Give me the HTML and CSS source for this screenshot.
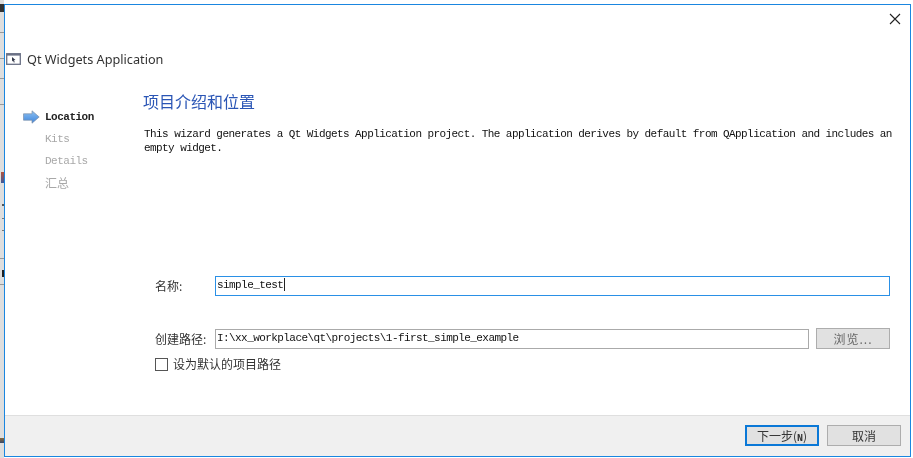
FILE: index.html
```html
<!DOCTYPE html>
<html lang="zh-CN">
<head>
<meta charset="utf-8">
<title>Qt Widgets Application</title>
<link rel="stylesheet" href="styles.css">
</head>
<body>
<div class="backdrop"></div>
<div class="dialog">
  <div class="content">
    <div class="closebar">
      <svg class="close" width="12" height="12" viewBox="0 0 12 12"><path d="M1 1l10 10M11 1L1 11" stroke="#222" stroke-width="1.1" fill="none"/></svg>
    </div>
    <div class="titlerow">
      <svg class="appicon" width="15" height="12" viewBox="0 0 15 12">
        <rect x=".7" y=".7" width="13.6" height="10.6" fill="#fff" stroke="#6b7186" stroke-width="1.300"/>
        <rect x="1" y="1" width="13" height="1.600" fill="#6b7186"/>
        <path d="M6 4l3.500 3-1.600.2.900 2-1 .4-.8-2L6 8.600z" fill="#33384a"/>
      </svg>
      <span class="apptitle">Qt Widgets Application</span>
    </div>
    <div class="wizard">
      <ul class="steps">
        <li class="step active">
          <svg class="arrow" width="17" height="14" viewBox="0 0 17 14">
            <defs><linearGradient id="ag" x1="0" y1="0" x2="0" y2="1"><stop offset="0" stop-color="#8cc0f2"/><stop offset="1" stop-color="#3f86dc"/></linearGradient></defs>
            <path d="M.5 3.800h8.500V.8L16.200 7 9 13.200v-3H.5z" fill="url(#ag)" stroke="#7e8fa8" stroke-width=".7"/>
          </svg>
          <span>Location</span>
        </li>
        <li class="step">Kits</li>
        <li class="step">Details</li>
        <li class="step cjk">汇总</li>
      </ul>
      <main class="page">
        <h1 class="heading">项目介绍和位置</h1>
        <p class="desc">This wizard generates a Qt Widgets Application project. The application derives by default from QApplication and includes an empty widget.</p>
        <div class="form">
          <div class="field name-field">
            <label class="label">名称:</label>
            <div class="input focused">simple_test<i class="caret"></i></div>
          </div>
          <div class="field path-field">
            <label class="label">创建路径:</label>
            <div class="input">I:\xx_workplace\qt\projects\1-first_simple_example</div>
            <button class="btn browse">浏览...</button>
          </div>
          <div class="check">
            <span class="box"></span>
            <span>设为默认的项目路径</span>
          </div>
        </div>
      </main>
    </div>
  </div>
  <div class="footer">
    <button class="btn primary">下一步(<span class="mn">N</span>)</button>
    <button class="btn">取消</button>
  </div>
</div>
</body>
</html>
```
FILE: styles.css
```css
* { box-sizing: border-box; }
html, body { margin: 0; height: 100%; }
body {
  display: flex;
  width: 913px;
  height: 458px;
  overflow: hidden;
  background: #fff;
  font-family: "Noto Sans CJK SC", "Noto Sans", sans-serif;
  color: #333;
  filter: blur(.35px);
}
.backdrop {
  width: 4px;
  flex: none;
  height: 458px;
  background:
    linear-gradient(#333, #333) 0 4px / 4px 8px no-repeat,
    linear-gradient(#999, #999) 0 32px / 4px 1px no-repeat,
    linear-gradient(#999, #999) 0 58px / 4px 1px no-repeat,
    linear-gradient(#999, #999) 0 78px / 4px 1px no-repeat,
    linear-gradient(#999, #999) 0 104px / 4px 1px no-repeat,
    linear-gradient(#b5533c, #3d5a9c) 1px 172px / 3px 11px no-repeat,
    linear-gradient(#555, #555) 2px 204px / 2px 2px no-repeat,
    linear-gradient(#777, #777) 2px 218px / 2px 1px no-repeat,
    linear-gradient(#777, #777) 2px 230px / 2px 1px no-repeat,
    linear-gradient(#999, #999) 0 258px / 4px 1px no-repeat,
    linear-gradient(#222, #222) 2px 270px / 2px 7px no-repeat,
    linear-gradient(#999, #999) 0 284px / 4px 1px no-repeat,
    linear-gradient(#8a6a3a, #3a4a6a) 0 438px / 4px 5px no-repeat,
    #dedede;
}
.dialog {
  width: 907px;
  height: 453px;
  margin-top: 4px;
  flex: none;
  display: flex;
  flex-direction: column;
  border: 1px solid #1a86e0;
  background: #fff;
}
.content { flex: 1; min-height: 0; }
.closebar {
  display: flex;
  justify-content: flex-end;
  height: 26px;
  padding: 8px 9px 0 0;
}
.close { display: block; }
.titlerow {
  display: flex;
  align-items: center;
  height: 22px;
  margin-top: 17px;
  padding-left: 1px;
}
.appicon { margin-right: 6px; }
.apptitle {
  font: 12.700px/22px "Noto Sans", sans-serif;
  color: #333;
}
.wizard { display: flex; margin-top: 11px; }
.steps {
  list-style: none;
  margin: 25px 0 0;
  padding: 0 0 0 40px;
  width: 138px;
  flex: none;
}
.step {
  position: relative;
  height: 22px;
  font: 11px/22px "Liberation Mono", monospace;
  letter-spacing: -.5px;
  color: #a8a8a8;
}
.step.active { color: #222; font-weight: 700; }
.step.cjk { font: 12px/22px "Noto Sans CJK SC", sans-serif; letter-spacing: 0; }
.arrow { position: absolute; left: -22px; top: 4px; }
.page { flex: 1; min-width: 0; padding-right: 14px; }
.heading {
  margin: 8px 0 0;
  font: 400 16px/24px "Noto Sans CJK SC", sans-serif;
  color: #2a55b5;
  height: 24px;
}
.desc {
  margin: 14px 0 0 1px;
  width: 756px;
  font: 11px/14px "Liberation Mono", monospace;
  letter-spacing: -.57px;
  color: #111;
}
.form { margin-top: 121px; padding-left: 12px; }
.field { display: flex; align-items: center; font-size: 12px; }
.label { width: 60px; flex: none; line-height: 18px; color: #333; }
.input {
  flex: none;
  height: 20px;
  padding: 0 1px;
  border: 1.500px solid #aaa;
  font: 11px/17px "Liberation Mono", monospace;
  letter-spacing: -.57px;
  color: #111;
  background: #fff;
}
.name-field .input { width: 675px; }
.path-field { margin-top: 32px; }
.path-field .input { width: 594px; }
.focused { border-color: #2a90e6; }
.caret {
  display: inline-block;
  width: 1px;
  height: 13px;
  margin-left: 1px;
  vertical-align: -3px;
  background: #222;
}
.btn {
  width: 74px;
  height: 21px;
  padding: 0;
  border: 1px solid #adadad;
  border-radius: 0;
  background: #e1e1e1;
  font: 12px/19px "Noto Sans CJK SC", sans-serif;
  color: #333;
}
.browse { margin-left: 7px; color: #666; letter-spacing: 1px; }
.check {
  display: flex;
  align-items: center;
  gap: 5px;
  margin-top: 6px;
  height: 18px;
  font-size: 12px;
  line-height: 18px;
}
.box {
  width: 13px;
  height: 13px;
  border: 1px solid #555;
  background: #fff;
}
.footer {
  flex: none;
  height: 41px;
  display: flex;
  justify-content: flex-end;
  gap: 8px;
  padding: 9px 9px 0 0;
  border-top: 1px solid #dfdfdf;
  background: #f0f0f0;
}
.primary { border: 2px solid #0a78d7; line-height: 17px; }
.mn { font-family: "Liberation Mono", monospace; font-size: 10px; font-weight: 700; }
```
